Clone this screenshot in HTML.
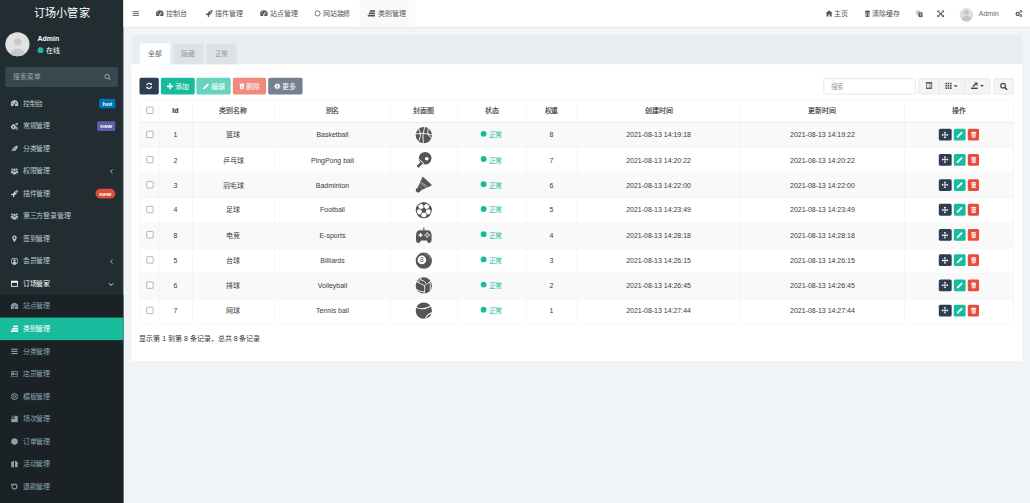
<!DOCTYPE html>
<html lang="zh-CN"><head><meta charset="utf-8">
<style>
html,body{margin:0;padding:0;width:1030px;height:503px;overflow:hidden;background:#f1f4f6}
*{box-sizing:border-box}
#root{position:absolute;left:0;top:0;width:1920px;height:938px;transform:scale(0.536458);transform-origin:0 0;overflow:hidden;font-family:"Liberation Sans",sans-serif;font-size:13px;color:#333;background:#f1f4f6}
.abs{position:absolute}
svg{display:block}
#side{left:0;top:0;width:230px;height:938px;background:#222d32}
#logo{left:0;top:0;width:230px;height:50px;line-height:50px;text-align:center;color:#fff;font-size:20.8px}
.menu{left:0;width:230px;height:42px;color:#b8c7ce;font-size:13px}
.menu .ic{position:absolute;left:20px;top:14px;width:14px;height:14px}
.menu .tx{position:absolute;left:42px;top:0;line-height:42px;white-space:nowrap}
.badge{position:absolute;right:15px;top:12px;height:18px;line-height:18px;padding:0 6px;font-size:11.5px;font-weight:bold;color:#fff;border-radius:3px}
.sub{color:#8aa4af}
#hdr{left:230px;top:0;width:1690px;height:50px;background:#fff}
.nav{top:0;height:50px;line-height:50px;color:#555;font-size:13px;white-space:nowrap}
.tab{height:39px;line-height:39px;text-align:center;color:#999;background:#dce3e8;font-size:13px}
.tab.act{background:#fff;color:#666}
.btn{top:145px;height:31px;line-height:31px;color:#fff;border-radius:3px;font-size:13px;white-space:nowrap}
.btn svg{display:inline-block;vertical-align:middle;position:relative;top:-1px;margin-right:3px}
.btn{text-align:center}
.cell{text-align:center;white-space:nowrap;color:#3a3a3a;font-size:13px}
.cb{display:inline-block;width:13px;height:13px;border:1.2px solid #777;border-radius:2px;background:#fff;vertical-align:middle;position:relative;top:-2px;left:1.5px}
.dot{display:inline-block;width:11px;height:11px;border-radius:50%;background:#18bc9c;margin-right:3px;vertical-align:middle;position:relative;top:-3px;left:-1px}
.sport svg{display:inline-block;vertical-align:middle;position:relative;top:-1px}
.op{display:inline-block;height:22px;border-radius:3px;vertical-align:middle;position:relative;top:-1.5px}
.oi{position:absolute;line-height:0}

</style></head>
<body>
<div id="root">
<div id="side" class="abs">
<div id="logo" class="abs">订场小管家</div>
<div class="abs" style="left:10px;top:60px;width:45px;height:45px;border-radius:50%;background:#e2e2e2;overflow:hidden"><div class="abs" style="left:16px;top:11.5px;width:13.5px;height:13.5px;border-radius:50%;background:#c8c8c8"></div><div class="abs" style="left:8.5px;top:30.5px;width:28px;height:22px;border-radius:50%;background:#c8c8c8"></div></div>
<div class="abs" style="left:70px;top:63.5px;color:#fff;font-weight:bold;font-size:13px;line-height:18px">Admin</div>
<div class="abs" style="left:70px;top:85px;color:#fff;font-size:13px;line-height:18px;white-space:nowrap"><span style="display:inline-block;width:11px;height:11px;border-radius:50%;background:#18bc9c;margin-right:4px;vertical-align:-1px"></span>在线</div>
<div class="abs" style="left:10px;top:125px;width:210px;height:37px;background:#374850;border-radius:3px"></div>
<div class="abs" style="left:24px;top:125px;line-height:37px;color:#9aa8ad;font-size:12.5px">搜索菜单</div>
<svg class="abs" style="left:194px;top:137px" width="13" height="13" viewBox="0 0 13 13"><circle cx="5.5" cy="5.5" r="4" fill="none" stroke="#9aa9ae" stroke-width="1.8"/><path d="M8.5 8.5 12 12" stroke="#9aa9ae" stroke-width="2"/></svg>
<div class="abs menu " style="top:172px;"><div class="ic"><svg width="14" height="14" viewBox="0 0 14 14" fill="currentColor" ><path d="M7 1A7 7 0 0 0 .6 11.8h12.8A7 7 0 0 0 7 1z"/><path d="M6.2 10.5 9.8 4.2" stroke="#222d32" stroke-width="1.5"/><circle cx="6.6" cy="10" r="1.5" fill="#222d32"/><circle cx="3" cy="7.5" r=".9" fill="#222d32"/><circle cx="11" cy="7.5" r=".9" fill="#222d32"/><circle cx="4.6" cy="4.3" r=".8" fill="#222d32"/></svg></div><div class="tx">控制台</div><div class="badge" style="background:#0073b7;border-radius:3px;">hot</div></div>
<div class="abs menu " style="top:214px;"><div class="ic"><svg width="14" height="14" viewBox="0 0 14 14" fill="currentColor" ><circle cx="5" cy="8.5" r="4.3"/><path d="M4 3h2v11H4zM-.5 7.5h11v2h-11z"/><circle cx="5" cy="8.5" r="1.5" fill="#222d32"/><circle cx="11.2" cy="3.3" r="2.4"/><circle cx="11.2" cy="3.3" r="1" fill="#222d32"/><circle cx="11.2" cy="11.5" r="2.4"/><circle cx="11.2" cy="11.5" r="1" fill="#222d32"/></svg></div><div class="tx">常规管理</div><div class="badge" style="background:#605ca8;border-radius:3px;">new</div></div>
<div class="abs menu " style="top:256px;"><div class="ic"><svg width="14" height="14" viewBox="0 0 14 14" fill="currentColor" ><path d="M1 13C3 6 7 2 13 1c0 6-4 11-10 10.5z"/><path d="M2 12.5 9 5" stroke="#222d32" stroke-width="1"/></svg></div><div class="tx">分类管理</div></div>
<div class="abs menu " style="top:298px;"><div class="ic"><svg width="14" height="14" viewBox="0 0 14 14" fill="currentColor" ><circle cx="2.8" cy="4" r="2.1"/><circle cx="11.2" cy="4" r="2.1"/><path d="M0 11V8.8C0 7.3 1.2 6.6 2.8 6.6S5.6 7.3 5.6 8.8V11zM8.4 11V8.8c0-1.5 1.2-2.2 2.8-2.2s2.8.7 2.8 2.2V11z"/><circle cx="7" cy="4.6" r="2.8" stroke="#222d32" stroke-width=".8"/><path d="M3 13.5v-2.8C3 8.8 4.8 7.8 7 7.8s4 1 4 2.9v2.8z" stroke="#222d32" stroke-width=".8"/></svg></div><div class="tx">权限管理</div><svg class="abs" style="left:204px;top:17px" width="8" height="9" viewBox="0 0 8 9"><path d="M6 1 2 4.5 6 8" fill="none" stroke="currentColor" stroke-width="1.6"/></svg></div>
<div class="abs menu " style="top:340px;"><div class="ic"><svg width="14" height="14" viewBox="0 0 14 14" fill="currentColor" ><path d="M13.5.5C9 .8 6 3.5 4 7L1 7.5 0 9.5 3.5 9.8 4.2 10.5 4.5 14 6.5 13 7 10C10.5 8 13.2 5 13.5.5z"/><circle cx="9.8" cy="4.2" r="1.2" fill="#222d32"/></svg></div><div class="tx">插件管理</div><div class="badge" style="background:#dd4b39;border-radius:9px;padding:0 7.5px">new</div></div>
<div class="abs menu " style="top:382px;"><div class="ic"><svg width="14" height="14" viewBox="0 0 14 14" fill="currentColor" ><circle cx="2.8" cy="4" r="2.1"/><circle cx="11.2" cy="4" r="2.1"/><path d="M0 11V8.8C0 7.3 1.2 6.6 2.8 6.6S5.6 7.3 5.6 8.8V11zM8.4 11V8.8c0-1.5 1.2-2.2 2.8-2.2s2.8.7 2.8 2.2V11z"/><circle cx="7" cy="4.6" r="2.8" stroke="#222d32" stroke-width=".8"/><path d="M3 13.5v-2.8C3 8.8 4.8 7.8 7 7.8s4 1 4 2.9v2.8z" stroke="#222d32" stroke-width=".8"/></svg></div><div class="tx">第三方登录管理</div></div>
<div class="abs menu " style="top:424px;"><div class="ic"><svg width="14" height="14" viewBox="0 0 14 14" fill="currentColor" ><path d="M7 1a4.2 4.2 0 0 0-4.2 4.2C2.8 8 7 13.5 7 13.5s4.2-5.5 4.2-8.3A4.2 4.2 0 0 0 7 1z"/><circle cx="7" cy="5.2" r="1.8" fill="#222d32"/></svg></div><div class="tx">签到管理</div></div>
<div class="abs menu " style="top:466px;"><div class="ic"><svg width="14" height="14" viewBox="0 0 14 14" fill="currentColor" ><circle cx="7" cy="7" r="6.5"/><circle cx="7" cy="7" r="5.2" fill="#222d32"/><circle cx="7" cy="5.5" r="2.2"/><path d="M3 11a4 3.2 0 0 1 8 0 5 5 0 0 1-8 0z"/></svg></div><div class="tx">会员管理</div><svg class="abs" style="left:204px;top:17px" width="8" height="9" viewBox="0 0 8 9"><path d="M6 1 2 4.5 6 8" fill="none" stroke="currentColor" stroke-width="1.6"/></svg></div>
<div class="abs menu " style="top:508px;color:#fff;"><div class="ic"><svg width="14" height="14" viewBox="0 0 14 14" fill="currentColor" ><rect x="0.5" y="1.5" width="13" height="11" rx="1"/><rect x="2" y="5" width="10" height="6" fill="#222d32"/></svg></div><div class="tx">订场管家</div><svg class="abs" style="left:202px;top:18px" width="10" height="8" viewBox="0 0 10 8"><path d="M1 2 5 6 9 2" fill="none" stroke="currentColor" stroke-width="1.6"/></svg></div>
<div class="abs" style="left:0;top:550px;width:230px;height:388px;background:#1a2226"></div>
<div class="abs menu sub" style="top:550px;"><div class="ic"><svg width="14" height="14" viewBox="0 0 14 14" fill="currentColor" ><path d="M7 1A7 7 0 0 0 .6 11.8h12.8A7 7 0 0 0 7 1z"/><path d="M6.2 10.5 9.8 4.2" stroke="#1a2226" stroke-width="1.5"/><circle cx="6.6" cy="10" r="1.5" fill="#1a2226"/><circle cx="3" cy="7.5" r=".9" fill="#1a2226"/><circle cx="11" cy="7.5" r=".9" fill="#1a2226"/><circle cx="4.6" cy="4.3" r=".8" fill="#1a2226"/></svg></div><div class="tx">站点管理</div></div>
<div class="abs menu sub" style="top:592px;background:#18bc9c;color:#fff;"><div class="ic"><svg width="14" height="14" viewBox="0 0 14 14" fill="currentColor" ><rect x="4.5" y="1" width="9.5" height="3"/><rect x="2.5" y="5.3" width="11.5" height="3.1"/><rect x="0" y="9.6" width="14" height="3.2"/></svg></div><div class="tx">类别管理</div></div>
<div class="abs menu sub" style="top:634px;"><div class="ic"><svg width="14" height="14" viewBox="0 0 14 14" fill="currentColor" ><rect x="1" y="2" width="12" height="2"/><rect x="1" y="6" width="12" height="2"/><rect x="1" y="10" width="12" height="2"/></svg></div><div class="tx">分类管理</div></div>
<div class="abs menu sub" style="top:676px;"><div class="ic"><svg width="14" height="14" viewBox="0 0 14 14" fill="currentColor" ><rect x="0.5" y="2" width="13" height="10" rx="1"/><rect x="1.7" y="3.2" width="10.6" height="7.6" fill="#1a2226"/><rect x="2.6" y="4.5" width="3.6" height="4.5"/><rect x="7.2" y="5" width="4.2" height="1.1"/><rect x="7.2" y="7.2" width="4.2" height="1.1"/></svg></div><div class="tx">店员管理</div></div>
<div class="abs menu sub" style="top:718px;"><div class="ic"><svg width="14" height="14" viewBox="0 0 14 14" fill="currentColor" ><circle cx="7" cy="7" r="6"/><circle cx="7" cy="7" r="4.6" fill="#1a2226"/><circle cx="7" cy="7" r="2.6"/><circle cx="7" cy="7" r="1.5" fill="#1a2226"/></svg></div><div class="tx">模板管理</div></div>
<div class="abs menu sub" style="top:760px;"><div class="ic"><svg width="14" height="14" viewBox="0 0 14 14" fill="currentColor" ><rect x="1" y="1" width="12" height="12"/><rect x="1" y="1" width="6" height="6" fill="#1a2226"/><rect x="2.5" y="2.5" width="3" height="3"/></svg></div><div class="tx">场次管理</div></div>
<div class="abs menu sub" style="top:802px;"><div class="ic"><svg width="14" height="14" viewBox="0 0 14 14" fill="currentColor" ><path d="M7 .5 13 3.8v6.4L7 13.5 1 10.2V3.8z"/></svg></div><div class="tx">订单管理</div></div>
<div class="abs menu sub" style="top:844px;"><div class="ic"><svg width="14" height="14" viewBox="0 0 14 14" fill="currentColor" ><rect x="1" y="5" width="12" height="8"/><rect x="0.5" y="3.5" width="13" height="3"/><rect x="6" y="3.5" width="2" height="9.5" fill="#1a2226"/><circle cx="4.5" cy="2.5" r="1.8"/><circle cx="9.5" cy="2.5" r="1.8"/></svg></div><div class="tx">活动管理</div></div>
<div class="abs menu sub" style="top:886px;"><div class="ic"><svg width="14" height="14" viewBox="0 0 14 14" fill="currentColor" ><path d="M2.5 7A4.5 4.5 0 1 0 7 2.5 4.6 4.6 0 0 0 3.8 3.8" fill="none" stroke="currentColor" stroke-width="2"/><path d="M1 1v5h5z"/></svg></div><div class="tx">退款管理</div></div>
</div>
<div id="hdr" class="abs"></div>
<div class="abs" style="left:230px;top:49.5px;width:1690px;height:1.5px;background:#dfe4e8"></div>
<svg class="abs" style="left:247px;top:20px" width="12" height="10" viewBox="0 0 12 10" fill="#666"><rect y="0" width="12" height="2"/><rect y="4" width="12" height="2"/><rect y="8" width="12" height="2"/></svg>
<div class="abs" style="left:669.6px;top:0;width:104px;height:50px;background:#fafafa"></div>
<svg class="abs" style="left:291px;top:18px;color:#555" width="14" height="14" viewBox="0 0 14 14" fill="currentColor"><path d="M7 1A7 7 0 0 0 .6 11.8h12.8A7 7 0 0 0 7 1z"/><path d="M6.2 10.5 9.8 4.2" stroke="#fff" stroke-width="1.5"/><circle cx="6.6" cy="10" r="1.5" fill="#fff"/><circle cx="3" cy="7.5" r=".9" fill="#fff"/><circle cx="11" cy="7.5" r=".9" fill="#fff"/><circle cx="4.6" cy="4.3" r=".8" fill="#fff"/></svg><div class="abs nav" style="left:309.8px">控制台</div>
<svg class="abs" style="left:383px;top:18px;color:#555" width="14" height="14" viewBox="0 0 14 14" fill="currentColor"><path d="M13.5.5C9 .8 6 3.5 4 7L1 7.5 0 9.5 3.5 9.8 4.2 10.5 4.5 14 6.5 13 7 10C10.5 8 13.2 5 13.5.5z"/><circle cx="9.8" cy="4.2" r="1.2" fill="#fff"/></svg><div class="abs nav" style="left:400px">插件管理</div>
<svg class="abs" style="left:485px;top:18px;color:#555" width="14" height="14" viewBox="0 0 14 14" fill="currentColor"><path d="M7 1A7 7 0 0 0 .6 11.8h12.8A7 7 0 0 0 7 1z"/><path d="M6.2 10.5 9.8 4.2" stroke="#fff" stroke-width="1.5"/><circle cx="6.6" cy="10" r="1.5" fill="#fff"/><circle cx="3" cy="7.5" r=".9" fill="#fff"/><circle cx="11" cy="7.5" r=".9" fill="#fff"/><circle cx="4.6" cy="4.3" r=".8" fill="#fff"/></svg><div class="abs nav" style="left:503.5px">站点管理</div>
<svg class="abs" style="left:586px;top:18px;color:#555" width="14" height="14" viewBox="0 0 14 14" fill="currentColor"><circle cx="6" cy="7" r="4.8" fill="none" stroke="currentColor" stroke-width="1.5"/></svg><div class="abs nav" style="left:601.3px">网站装修</div>
<svg class="abs" style="left:685px;top:18px;color:#555" width="14" height="14" viewBox="0 0 14 14" fill="currentColor"><rect x="4.5" y="1" width="9.5" height="3"/><rect x="2.5" y="5.3" width="11.5" height="3.1"/><rect x="0" y="9.6" width="14" height="3.2"/></svg><div class="abs nav" style="left:704.4px">类别管理</div>
<svg class="abs" style="left:1539px;top:19px" width="13" height="12" viewBox="0 0 13 12" fill="#555"><path d="M6.5 0 0 5.6h1.8V12h3.4V8h2.6v4h3.4V5.6H13z"/></svg>
<div class="abs nav" style="left:1555px">主页</div>
<svg class="abs" style="left:1611.5px;top:19px" width="10" height="13" viewBox="0 0 10 13" fill="#555"><rect x="0" y="1.5" width="10" height="1.8"/><rect x="3" y="0" width="4" height="2"/><path d="M1 4h8l-.6 9H1.6z"/><rect x="3" y="5.5" width="1" height="6" fill="#fff"/><rect x="6" y="5.5" width="1" height="6" fill="#fff"/></svg>
<div class="abs nav" style="left:1625.3px">清除缓存</div>
<svg class="abs" style="left:1707px;top:19px" width="13" height="13" viewBox="0 0 13 13"><path d="M0 0h7l1 3v6H0z" fill="#ccc"/><path d="M5 4h8v9H6L5 10z" fill="#555"/><path d="M2 6h3M7 7h4M9 6v5" stroke="#fff" stroke-width="1"/></svg>
<svg class="abs" style="left:1747px;top:19px" width="13" height="13" viewBox="0 0 13 13"><g stroke="#555" stroke-width="2"><path d="M2.5 2.5 10.5 10.5M10.5 2.5 2.5 10.5"/></g><g fill="#555"><path d="M0 0h5L0 5z"/><path d="M13 0v5L8 0z"/><path d="M0 13V8l5 5z"/><path d="M13 13H8l5-5z"/></g></svg>
<div class="abs" style="left:1789px;top:14.5px;width:25px;height:25px;border-radius:50%;background:#dedede;overflow:hidden"><div class="abs" style="left:8px;top:4.5px;width:9px;height:9px;border-radius:50%;background:#c4c4c4"></div><div class="abs" style="left:3px;top:15px;width:19px;height:16px;border-radius:50%;background:#c4c4c4"></div></div>
<div class="abs nav" style="left:1824.6px;color:#666">Admin</div>
<svg class="abs" style="left:1891.5px;top:18px" width="14" height="14" viewBox="0 0 14 14" fill="#555"><circle cx="5" cy="8" r="4"/><circle cx="5" cy="8" r="1.6" fill="#fff"/><circle cx="11" cy="3.5" r="2.5"/><circle cx="11" cy="3.5" r="1" fill="#fff"/><circle cx="11" cy="11" r="2.5"/><circle cx="11" cy="11" r="1" fill="#fff"/></svg>
<div class="abs" style="left:245px;top:65px;width:1660px;height:608px;background:#fff;border-radius:2px"></div>
<div class="abs" style="left:245px;top:65px;width:1660px;height:55px;background:#e8edf0;border-radius:2px 2px 0 0"></div>
<div class="abs tab act" style="left:260.6px;width:56px;top:81px">全部</div>
<div class="abs tab" style="left:322.9px;width:56px;top:81px">隐藏</div>
<div class="abs tab" style="left:384.9px;width:56px;top:81px">正常</div>
<div class="abs btn" style="left:260px;width:36.3px;background:#2c3e50"><span style="position:absolute;left:11px;top:8.5px;line-height:0"><svg width="14" height="14" viewBox="0 0 14 14" fill="none" stroke="#fff" stroke-width="2"><path d="M2.5 6A4.6 4.6 0 0 1 11 4.5"/><path d="M11.5 8A4.6 4.6 0 0 1 3 9.5"/><path d="M12.2 1.5v4h-4z" fill="#fff" stroke="none"/><path d="M1.8 12.5v-4h4z" fill="#fff" stroke="none"/></svg></span></div>
<div class="abs btn" style="left:300px;width:63.3px;background:#18bc9c;opacity:1"><svg width="12" height="12" viewBox="0 0 12 12" fill="#fff"><rect x="4.5" y="0" width="3" height="12"/><rect x="0" y="4.5" width="12" height="3"/></svg>添加</div>
<div class="abs btn" style="left:366.3px;width:63.8px;background:#18bc9c;opacity:0.65"><svg width="12" height="12" viewBox="0 0 12 12" fill="#fff"><path d="M0 12l.8-3.2L8.6 1 11 3.4 3.2 11.2z"/><path d="M9.4.2 11.8 2.6 11 3.4 8.6 1z"/></svg>编辑</div>
<div class="abs btn" style="left:434.2px;width:62px;background:#e74c3c;opacity:0.65"><svg width="10" height="12" viewBox="0 0 10 12" fill="#fff"><rect x="0" y="1.2" width="10" height="1.8"/><rect x="3" y="0" width="4" height="2"/><path d="M1 3.6h8l-.6 8.4H1.6z"/><rect x="3" y="5" width="1" height="5.5" fill="#e74c3c"/><rect x="6" y="5" width="1" height="5.5" fill="#e74c3c"/></svg>删除</div>
<div class="abs btn" style="left:500px;width:63.7px;background:#748290;opacity:1"><svg width="12" height="12" viewBox="0 0 12 12" fill="#fff"><circle cx="6" cy="6" r="4.4"/><circle cx="6" cy="6" r="1.7" fill="#748290"/><path d="M5 0h2v2H5zM5 10h2v2H5zM0 5h2v2H0zM10 5h2v2h-2zM1.4 2.8l1.4-1.4 1.4 1.4-1.4 1.4zM7.8 9.2l1.4-1.4 1.4 1.4-1.4 1.4zM1.4 9.2l1.4-1.4 1.4 1.4-1.4 1.4zM7.8 2.8l1.4-1.4 1.4 1.4-1.4 1.4z"/></svg>更多</div>
<div class="abs" style="left:1534.7px;top:146px;width:172.2px;height:30.3px;border:1px solid #d2d6de;border-radius:3px;background:#fff"></div>
<div class="abs" style="left:1548.5px;top:146px;line-height:30px;color:#999;font-size:12px">搜索</div>
<div class="abs" style="left:1711.8px;top:146px;width:134.2px;height:30.3px;border:1px solid #ddd;border-radius:3px;background:#f4f4f4"></div>
<div class="abs" style="left:1749.6px;top:146px;width:1px;height:30.3px;background:#ddd"></div>
<div class="abs" style="left:1797.6px;top:146px;width:1px;height:30.3px;background:#ddd"></div>
<div class="abs" style="left:1852px;top:146px;width:37.6px;height:30.3px;border:1px solid #ddd;border-radius:3px;background:#f4f4f4"></div>
<svg class="abs" style="left:1726px;top:152.5px" width="12" height="13" viewBox="0 0 12 13"><rect x=".8" y=".8" width="10.4" height="11.4" fill="#bbb" stroke="#555" stroke-width="1.6"/><rect x="1.6" y="2" width="4.2" height="9" fill="#e8e8e8"/><rect x="1.6" y="1.2" width="8.8" height="1.6" fill="#555"/><rect x="1.6" y="10.4" width="8.8" height="1.2" fill="#555"/></svg>
<svg class="abs" style="left:1762px;top:153.5px" width="24" height="13" viewBox="0 0 24 13" fill="#444"><rect x="0" y="0" width="3" height="3"/><rect x="4.4" y="0" width="3" height="3"/><rect x="8.8" y="0" width="3" height="3"/><rect x="0" y="4.4" width="3" height="3"/><rect x="4.4" y="4.4" width="3" height="3"/><rect x="8.8" y="4.4" width="3" height="3"/><rect x="0" y="8.8" width="3" height="3"/><rect x="4.4" y="8.8" width="3" height="3"/><rect x="8.8" y="8.8" width="3" height="3"/><path d="M16 5h7l-3.5 3.5z"/></svg>
<svg class="abs" style="left:1810px;top:152.5px" width="26" height="13" viewBox="0 0 26 13" fill="#444"><rect x="0" y="10.3" width="12.5" height="2.7"/><path d="M3.5 8.8 9 3.3" stroke="#444" stroke-width="2.6"/><path d="M6 .8h6.3v6.3z"/><path d="M17 5.5h7l-3.5 3.5z"/></svg>
<svg class="abs" style="left:1864px;top:154px" width="14" height="14" viewBox="0 0 14 14"><circle cx="5.8" cy="5.8" r="4.3" fill="none" stroke="#444" stroke-width="2.2"/><path d="M9 9 13 13" stroke="#444" stroke-width="2.8" stroke-linecap="round"/></svg>
<div class="abs" style="left:259.7px;top:229.0px;width:1629.5px;height:46.8px;background:#f9f9f9"></div>
<div class="abs" style="left:259.7px;top:274.8px;width:1629.5px;height:1px;background:#f0f0f0"></div>
<div class="abs" style="left:259.7px;top:321.6px;width:1629.5px;height:1px;background:#f0f0f0"></div>
<div class="abs" style="left:259.7px;top:322.6px;width:1629.5px;height:46.8px;background:#f9f9f9"></div>
<div class="abs" style="left:259.7px;top:368.40000000000003px;width:1629.5px;height:1px;background:#f0f0f0"></div>
<div class="abs" style="left:259.7px;top:415.2px;width:1629.5px;height:1px;background:#f0f0f0"></div>
<div class="abs" style="left:259.7px;top:416.2px;width:1629.5px;height:46.8px;background:#f9f9f9"></div>
<div class="abs" style="left:259.7px;top:462.0px;width:1629.5px;height:1px;background:#f0f0f0"></div>
<div class="abs" style="left:259.7px;top:508.8px;width:1629.5px;height:1px;background:#f0f0f0"></div>
<div class="abs" style="left:259.7px;top:509.79999999999995px;width:1629.5px;height:46.8px;background:#f9f9f9"></div>
<div class="abs" style="left:259.7px;top:555.5999999999999px;width:1629.5px;height:1px;background:#f0f0f0"></div>
<div class="abs" style="left:259.7px;top:602.3999999999999px;width:1629.5px;height:1px;background:#f0f0f0"></div>
<div class="abs" style="left:259.7px;top:187.2px;width:1629.5px;height:1px;background:#f0f0f0"></div>
<div class="abs" style="left:259.7px;top:227px;width:1629.5px;height:2px;background:#ebebeb"></div>
<div class="abs" style="left:259.2px;top:187.2px;width:1px;height:416.2px;background:#f0f0f0"></div>
<div class="abs" style="left:295.5px;top:187.2px;width:1px;height:416.2px;background:#f0f0f0"></div>
<div class="abs" style="left:357.7px;top:187.2px;width:1px;height:416.2px;background:#f0f0f0"></div>
<div class="abs" style="left:511.4px;top:187.2px;width:1px;height:416.2px;background:#f0f0f0"></div>
<div class="abs" style="left:727.2px;top:187.2px;width:1px;height:416.2px;background:#f0f0f0"></div>
<div class="abs" style="left:851.9px;top:187.2px;width:1px;height:416.2px;background:#f0f0f0"></div>
<div class="abs" style="left:980.4px;top:187.2px;width:1px;height:416.2px;background:#f0f0f0"></div>
<div class="abs" style="left:1074.7px;top:187.2px;width:1px;height:416.2px;background:#f0f0f0"></div>
<div class="abs" style="left:1379.5px;top:187.2px;width:1px;height:416.2px;background:#f0f0f0"></div>
<div class="abs" style="left:1685.7px;top:187.2px;width:1px;height:416.2px;background:#f0f0f0"></div>
<div class="abs" style="left:1888.7px;top:187.2px;width:1px;height:416.2px;background:#f0f0f0"></div>
<div class="abs cell" style="left:259.7px;width:36.30000000000001px;top:187.2px;height:39.80000000000001px;line-height:39.80000000000001px;font-weight:500;color:#333;-webkit-text-stroke:0.25px #333"><span class="cb"></span></div>
<div class="abs cell" style="left:296px;width:62.19999999999999px;top:187.2px;height:39.80000000000001px;line-height:39.80000000000001px;font-weight:bold;color:#333;-webkit-text-stroke:0.25px #333">Id</div>
<div class="abs cell" style="left:358.2px;width:153.7px;top:187.2px;height:39.80000000000001px;line-height:39.80000000000001px;font-weight:500;color:#333;-webkit-text-stroke:0.25px #333">类别名称</div>
<div class="abs cell" style="left:511.9px;width:215.80000000000007px;top:187.2px;height:39.80000000000001px;line-height:39.80000000000001px;font-weight:500;color:#333;-webkit-text-stroke:0.25px #333">别名</div>
<div class="abs cell" style="left:727.7px;width:124.69999999999993px;top:187.2px;height:39.80000000000001px;line-height:39.80000000000001px;font-weight:500;color:#333;-webkit-text-stroke:0.25px #333">封面图</div>
<div class="abs cell" style="left:852.4px;width:128.5px;top:187.2px;height:39.80000000000001px;line-height:39.80000000000001px;font-weight:500;color:#333;-webkit-text-stroke:0.25px #333">状态</div>
<div class="abs cell" style="left:980.9px;width:94.30000000000007px;top:187.2px;height:39.80000000000001px;line-height:39.80000000000001px;font-weight:500;color:#333;-webkit-text-stroke:0.25px #333">权重</div>
<div class="abs cell" style="left:1075.2px;width:304.79999999999995px;top:187.2px;height:39.80000000000001px;line-height:39.80000000000001px;font-weight:500;color:#333;-webkit-text-stroke:0.25px #333">创建时间</div>
<div class="abs cell" style="left:1380px;width:306.20000000000005px;top:187.2px;height:39.80000000000001px;line-height:39.80000000000001px;font-weight:500;color:#333;-webkit-text-stroke:0.25px #333">更新时间</div>
<div class="abs cell" style="left:1686.2px;width:203.0px;top:187.2px;height:39.80000000000001px;line-height:39.80000000000001px;font-weight:500;color:#333;-webkit-text-stroke:0.25px #333">操作</div>
<div class="abs cell" style="left:259.7px;width:36.30000000000001px;top:229.0px;height:46.8px;line-height:46.8px;"><span class="cb"></span></div>
<div class="abs cell" style="left:296px;width:62.19999999999999px;top:229.0px;height:46.8px;line-height:46.8px;">1</div>
<div class="abs cell" style="left:358.2px;width:153.7px;top:229.0px;height:46.8px;line-height:46.8px;">篮球</div>
<div class="abs cell" style="left:511.9px;width:215.80000000000007px;top:229.0px;height:46.8px;line-height:46.8px;">Basketball</div>
<div class="abs cell" style="left:727.7px;width:124.69999999999993px;top:229.0px;height:46.8px;line-height:46.8px;"><span class="sport"><svg width="32" height="32" viewBox="0 0 32 32"><circle cx="16" cy="16" r="15.2" fill="#555"/><g stroke="#fff" stroke-width="1.7" fill="none"><path d="M17.5 1.2Q12.5 15 15 30.8"/><path d="M1.2 13.5Q15 10.5 30.8 15.5"/><path d="M6.5 4.5Q11 11 9.5 18Q8 24 6.5 27"/><path d="M24.5 3.5Q22 9 25 16Q27.5 20 30.5 21"/></g></svg></span></div>
<div class="abs cell" style="left:852.4px;width:128.5px;top:229.0px;height:46.8px;line-height:46.8px;color:#18bc9c"><span class="dot"></span>正常</div>
<div class="abs cell" style="left:980.9px;width:94.30000000000007px;top:229.0px;height:46.8px;line-height:46.8px;">8</div>
<div class="abs cell" style="left:1075.2px;width:304.79999999999995px;top:229.0px;height:46.8px;line-height:46.8px;">2021-08-13 14:19:18</div>
<div class="abs cell" style="left:1380px;width:306.20000000000005px;top:229.0px;height:46.8px;line-height:46.8px;">2021-08-13 14:19:22</div>
<div class="abs cell" style="left:1686.2px;width:203.0px;top:229.0px;height:46.8px;line-height:46.8px;"><span class="op" style="background:#2c3e50;width:23.4px;margin-right:4.4px"><span class="oi" style="left:5.2px;top:4.5px"><svg width="13" height="13" viewBox="0 0 13 13" fill="#fff"><path d="M6.5 0 9 2.5H7.3v3.2h3.2V4L13 6.5 10.5 9V7.3H7.3v3.2H9L6.5 13 4 10.5h1.7V7.3H2.5V9L0 6.5 2.5 4v1.7h3.2V2.5H4z"/></svg></span></span><span class="op" style="background:#18bc9c;width:22px;margin-right:4.4px"><span class="oi" style="left:5px;top:5px"><svg width="12" height="12" viewBox="0 0 12 12" fill="#fff"><path d="M0 12l.8-3.2L8.6 1 11 3.4 3.2 11.2z"/><path d="M9.4.2 11.8 2.6 11 3.4 8.6 1z"/></svg></span></span><span class="op" style="background:#e74c3c;width:20.7px"><span class="oi" style="left:5.4px;top:5px"><svg width="10" height="12" viewBox="0 0 10 12" fill="#fff"><rect x="0" y="1.2" width="10" height="1.8"/><rect x="3" y="0" width="4" height="2"/><path d="M1 3.6h8l-.6 8.4H1.6z"/><rect x="3" y="5" width="1" height="5.5" fill="#e74c3c"/><rect x="6" y="5" width="1" height="5.5" fill="#e74c3c"/></svg></span></span></div>
<div class="abs cell" style="left:259.7px;width:36.30000000000001px;top:275.8px;height:46.8px;line-height:46.8px;"><span class="cb"></span></div>
<div class="abs cell" style="left:296px;width:62.19999999999999px;top:275.8px;height:46.8px;line-height:46.8px;">2</div>
<div class="abs cell" style="left:358.2px;width:153.7px;top:275.8px;height:46.8px;line-height:46.8px;">乒乓球</div>
<div class="abs cell" style="left:511.9px;width:215.80000000000007px;top:275.8px;height:46.8px;line-height:46.8px;">PingPong ball</div>
<div class="abs cell" style="left:727.7px;width:124.69999999999993px;top:275.8px;height:46.8px;line-height:46.8px;"><span class="sport"><svg width="32" height="32" viewBox="0 0 32 32"><circle cx="18.5" cy="13" r="11.8" fill="#555"/><path d="M12.5 17.5 2.5 27.5l3.5 3.5 10-10z" fill="#555"/><path d="M8 15 17 24.5" stroke="#fff" stroke-width="1.8"/><circle cx="21.5" cy="14" r="3.4" fill="#fff"/></svg></span></div>
<div class="abs cell" style="left:852.4px;width:128.5px;top:275.8px;height:46.8px;line-height:46.8px;color:#18bc9c"><span class="dot"></span>正常</div>
<div class="abs cell" style="left:980.9px;width:94.30000000000007px;top:275.8px;height:46.8px;line-height:46.8px;">7</div>
<div class="abs cell" style="left:1075.2px;width:304.79999999999995px;top:275.8px;height:46.8px;line-height:46.8px;">2021-08-13 14:20:22</div>
<div class="abs cell" style="left:1380px;width:306.20000000000005px;top:275.8px;height:46.8px;line-height:46.8px;">2021-08-13 14:20:22</div>
<div class="abs cell" style="left:1686.2px;width:203.0px;top:275.8px;height:46.8px;line-height:46.8px;"><span class="op" style="background:#2c3e50;width:23.4px;margin-right:4.4px"><span class="oi" style="left:5.2px;top:4.5px"><svg width="13" height="13" viewBox="0 0 13 13" fill="#fff"><path d="M6.5 0 9 2.5H7.3v3.2h3.2V4L13 6.5 10.5 9V7.3H7.3v3.2H9L6.5 13 4 10.5h1.7V7.3H2.5V9L0 6.5 2.5 4v1.7h3.2V2.5H4z"/></svg></span></span><span class="op" style="background:#18bc9c;width:22px;margin-right:4.4px"><span class="oi" style="left:5px;top:5px"><svg width="12" height="12" viewBox="0 0 12 12" fill="#fff"><path d="M0 12l.8-3.2L8.6 1 11 3.4 3.2 11.2z"/><path d="M9.4.2 11.8 2.6 11 3.4 8.6 1z"/></svg></span></span><span class="op" style="background:#e74c3c;width:20.7px"><span class="oi" style="left:5.4px;top:5px"><svg width="10" height="12" viewBox="0 0 10 12" fill="#fff"><rect x="0" y="1.2" width="10" height="1.8"/><rect x="3" y="0" width="4" height="2"/><path d="M1 3.6h8l-.6 8.4H1.6z"/><rect x="3" y="5" width="1" height="5.5" fill="#e74c3c"/><rect x="6" y="5" width="1" height="5.5" fill="#e74c3c"/></svg></span></span></div>
<div class="abs cell" style="left:259.7px;width:36.30000000000001px;top:322.6px;height:46.8px;line-height:46.8px;"><span class="cb"></span></div>
<div class="abs cell" style="left:296px;width:62.19999999999999px;top:322.6px;height:46.8px;line-height:46.8px;">3</div>
<div class="abs cell" style="left:358.2px;width:153.7px;top:322.6px;height:46.8px;line-height:46.8px;">羽毛球</div>
<div class="abs cell" style="left:511.9px;width:215.80000000000007px;top:322.6px;height:46.8px;line-height:46.8px;">Badminton</div>
<div class="abs cell" style="left:727.7px;width:124.69999999999993px;top:322.6px;height:46.8px;line-height:46.8px;"><span class="sport"><svg width="32" height="32" viewBox="0 0 32 32"><path d="M14 0 31.5 16.5 13 24.5 7 15.5z" fill="#555"/><path d="M7 15.5 13 24.5 9.5 27 4.5 19z" fill="#555"/><circle cx="5.5" cy="25.5" r="4.5" fill="#555"/><g stroke="#fff" stroke-width="1.1" opacity=".8"><path d="M9.5 12.5 21 20.5"/><path d="M11 10.5 22.5 18.5"/></g></svg></span></div>
<div class="abs cell" style="left:852.4px;width:128.5px;top:322.6px;height:46.8px;line-height:46.8px;color:#18bc9c"><span class="dot"></span>正常</div>
<div class="abs cell" style="left:980.9px;width:94.30000000000007px;top:322.6px;height:46.8px;line-height:46.8px;">6</div>
<div class="abs cell" style="left:1075.2px;width:304.79999999999995px;top:322.6px;height:46.8px;line-height:46.8px;">2021-08-13 14:22:00</div>
<div class="abs cell" style="left:1380px;width:306.20000000000005px;top:322.6px;height:46.8px;line-height:46.8px;">2021-08-13 14:22:00</div>
<div class="abs cell" style="left:1686.2px;width:203.0px;top:322.6px;height:46.8px;line-height:46.8px;"><span class="op" style="background:#2c3e50;width:23.4px;margin-right:4.4px"><span class="oi" style="left:5.2px;top:4.5px"><svg width="13" height="13" viewBox="0 0 13 13" fill="#fff"><path d="M6.5 0 9 2.5H7.3v3.2h3.2V4L13 6.5 10.5 9V7.3H7.3v3.2H9L6.5 13 4 10.5h1.7V7.3H2.5V9L0 6.5 2.5 4v1.7h3.2V2.5H4z"/></svg></span></span><span class="op" style="background:#18bc9c;width:22px;margin-right:4.4px"><span class="oi" style="left:5px;top:5px"><svg width="12" height="12" viewBox="0 0 12 12" fill="#fff"><path d="M0 12l.8-3.2L8.6 1 11 3.4 3.2 11.2z"/><path d="M9.4.2 11.8 2.6 11 3.4 8.6 1z"/></svg></span></span><span class="op" style="background:#e74c3c;width:20.7px"><span class="oi" style="left:5.4px;top:5px"><svg width="10" height="12" viewBox="0 0 10 12" fill="#fff"><rect x="0" y="1.2" width="10" height="1.8"/><rect x="3" y="0" width="4" height="2"/><path d="M1 3.6h8l-.6 8.4H1.6z"/><rect x="3" y="5" width="1" height="5.5" fill="#e74c3c"/><rect x="6" y="5" width="1" height="5.5" fill="#e74c3c"/></svg></span></span></div>
<div class="abs cell" style="left:259.7px;width:36.30000000000001px;top:369.4px;height:46.8px;line-height:46.8px;"><span class="cb"></span></div>
<div class="abs cell" style="left:296px;width:62.19999999999999px;top:369.4px;height:46.8px;line-height:46.8px;">4</div>
<div class="abs cell" style="left:358.2px;width:153.7px;top:369.4px;height:46.8px;line-height:46.8px;">足球</div>
<div class="abs cell" style="left:511.9px;width:215.80000000000007px;top:369.4px;height:46.8px;line-height:46.8px;">Football</div>
<div class="abs cell" style="left:727.7px;width:124.69999999999993px;top:369.4px;height:46.8px;line-height:46.8px;"><span class="sport"><svg width="32" height="32" viewBox="0 0 32 32"><defs><clipPath id="fbc"><circle cx="16" cy="16" r="15.2"/></clipPath></defs><g clip-path="url(#fbc)"><circle cx="16" cy="16" r="15.2" fill="#555"/><circle cx="16" cy="16" r="13" fill="#fff"/><path d="M16 10.5 21.2 14.3 19.2 20.4H12.8L10.8 14.3z" fill="#555"/><circle cx="16" cy="1" r="5" fill="#555"/><circle cx="30.3" cy="11.4" r="5" fill="#555"/><circle cx="24.8" cy="28.2" r="5" fill="#555"/><circle cx="7.2" cy="28.2" r="5" fill="#555"/><circle cx="1.7" cy="11.4" r="5" fill="#555"/><g stroke="#555" stroke-width="1.8"><path d="M16 10.5V5M21.2 14.3l4.8-1.5M19.2 20.4l3 4M12.8 20.4l-3 4M10.8 14.3 6 12.8"/></g></g></svg></span></div>
<div class="abs cell" style="left:852.4px;width:128.5px;top:369.4px;height:46.8px;line-height:46.8px;color:#18bc9c"><span class="dot"></span>正常</div>
<div class="abs cell" style="left:980.9px;width:94.30000000000007px;top:369.4px;height:46.8px;line-height:46.8px;">5</div>
<div class="abs cell" style="left:1075.2px;width:304.79999999999995px;top:369.4px;height:46.8px;line-height:46.8px;">2021-08-13 14:23:49</div>
<div class="abs cell" style="left:1380px;width:306.20000000000005px;top:369.4px;height:46.8px;line-height:46.8px;">2021-08-13 14:23:49</div>
<div class="abs cell" style="left:1686.2px;width:203.0px;top:369.4px;height:46.8px;line-height:46.8px;"><span class="op" style="background:#2c3e50;width:23.4px;margin-right:4.4px"><span class="oi" style="left:5.2px;top:4.5px"><svg width="13" height="13" viewBox="0 0 13 13" fill="#fff"><path d="M6.5 0 9 2.5H7.3v3.2h3.2V4L13 6.5 10.5 9V7.3H7.3v3.2H9L6.5 13 4 10.5h1.7V7.3H2.5V9L0 6.5 2.5 4v1.7h3.2V2.5H4z"/></svg></span></span><span class="op" style="background:#18bc9c;width:22px;margin-right:4.4px"><span class="oi" style="left:5px;top:5px"><svg width="12" height="12" viewBox="0 0 12 12" fill="#fff"><path d="M0 12l.8-3.2L8.6 1 11 3.4 3.2 11.2z"/><path d="M9.4.2 11.8 2.6 11 3.4 8.6 1z"/></svg></span></span><span class="op" style="background:#e74c3c;width:20.7px"><span class="oi" style="left:5.4px;top:5px"><svg width="10" height="12" viewBox="0 0 10 12" fill="#fff"><rect x="0" y="1.2" width="10" height="1.8"/><rect x="3" y="0" width="4" height="2"/><path d="M1 3.6h8l-.6 8.4H1.6z"/><rect x="3" y="5" width="1" height="5.5" fill="#e74c3c"/><rect x="6" y="5" width="1" height="5.5" fill="#e74c3c"/></svg></span></span></div>
<div class="abs cell" style="left:259.7px;width:36.30000000000001px;top:416.2px;height:46.8px;line-height:46.8px;"><span class="cb"></span></div>
<div class="abs cell" style="left:296px;width:62.19999999999999px;top:416.2px;height:46.8px;line-height:46.8px;">8</div>
<div class="abs cell" style="left:358.2px;width:153.7px;top:416.2px;height:46.8px;line-height:46.8px;">电竞</div>
<div class="abs cell" style="left:511.9px;width:215.80000000000007px;top:416.2px;height:46.8px;line-height:46.8px;">E-sports</div>
<div class="abs cell" style="left:727.7px;width:124.69999999999993px;top:416.2px;height:46.8px;line-height:46.8px;"><span class="sport"><svg width="32" height="32" viewBox="0 0 32 32"><path d="M9 6h14c4.5 0 7.5 3.5 7.5 9.5v9c0 3.5-2 5.5-4.5 5.5-2.5 0-3.5-2-4.5-4.5h-11C9.5 28 8.5 30 6 30c-2.5 0-4.5-2-4.5-5.5v-9C1.5 9.5 4.5 6 9 6z" fill="#555"/><rect x="15" y="1.5" width="2.2" height="5" fill="#555"/><path d="M10 11.5v7.5M6.2 15.2h7.6" stroke="#fff" stroke-width="2.6"/><g fill="none" stroke="#fff" stroke-width="1.2"><circle cx="22.5" cy="12" r="1.5"/><circle cx="22.5" cy="18.5" r="1.5"/><circle cx="19.2" cy="15.2" r="1.5"/><circle cx="25.8" cy="15.2" r="1.5"/></g></svg></span></div>
<div class="abs cell" style="left:852.4px;width:128.5px;top:416.2px;height:46.8px;line-height:46.8px;color:#18bc9c"><span class="dot"></span>正常</div>
<div class="abs cell" style="left:980.9px;width:94.30000000000007px;top:416.2px;height:46.8px;line-height:46.8px;">4</div>
<div class="abs cell" style="left:1075.2px;width:304.79999999999995px;top:416.2px;height:46.8px;line-height:46.8px;">2021-08-13 14:28:18</div>
<div class="abs cell" style="left:1380px;width:306.20000000000005px;top:416.2px;height:46.8px;line-height:46.8px;">2021-08-13 14:28:18</div>
<div class="abs cell" style="left:1686.2px;width:203.0px;top:416.2px;height:46.8px;line-height:46.8px;"><span class="op" style="background:#2c3e50;width:23.4px;margin-right:4.4px"><span class="oi" style="left:5.2px;top:4.5px"><svg width="13" height="13" viewBox="0 0 13 13" fill="#fff"><path d="M6.5 0 9 2.5H7.3v3.2h3.2V4L13 6.5 10.5 9V7.3H7.3v3.2H9L6.5 13 4 10.5h1.7V7.3H2.5V9L0 6.5 2.5 4v1.7h3.2V2.5H4z"/></svg></span></span><span class="op" style="background:#18bc9c;width:22px;margin-right:4.4px"><span class="oi" style="left:5px;top:5px"><svg width="12" height="12" viewBox="0 0 12 12" fill="#fff"><path d="M0 12l.8-3.2L8.6 1 11 3.4 3.2 11.2z"/><path d="M9.4.2 11.8 2.6 11 3.4 8.6 1z"/></svg></span></span><span class="op" style="background:#e74c3c;width:20.7px"><span class="oi" style="left:5.4px;top:5px"><svg width="10" height="12" viewBox="0 0 10 12" fill="#fff"><rect x="0" y="1.2" width="10" height="1.8"/><rect x="3" y="0" width="4" height="2"/><path d="M1 3.6h8l-.6 8.4H1.6z"/><rect x="3" y="5" width="1" height="5.5" fill="#e74c3c"/><rect x="6" y="5" width="1" height="5.5" fill="#e74c3c"/></svg></span></span></div>
<div class="abs cell" style="left:259.7px;width:36.30000000000001px;top:463.0px;height:46.8px;line-height:46.8px;"><span class="cb"></span></div>
<div class="abs cell" style="left:296px;width:62.19999999999999px;top:463.0px;height:46.8px;line-height:46.8px;">5</div>
<div class="abs cell" style="left:358.2px;width:153.7px;top:463.0px;height:46.8px;line-height:46.8px;">台球</div>
<div class="abs cell" style="left:511.9px;width:215.80000000000007px;top:463.0px;height:46.8px;line-height:46.8px;">Billiards</div>
<div class="abs cell" style="left:727.7px;width:124.69999999999993px;top:463.0px;height:46.8px;line-height:46.8px;"><span class="sport"><svg width="32" height="32" viewBox="0 0 32 32"><circle cx="16" cy="16" r="15.2" fill="#555"/><circle cx="12.5" cy="14.5" r="8" fill="#fff"/><text x="12.5" y="19" font-size="12.5" font-family="Liberation Sans" text-anchor="middle" fill="#555">8</text><path d="M19 3.5A13 13 0 0 1 28.5 13" stroke="#ccc" stroke-width="1.6" fill="none" stroke-dasharray="2 1"/></svg></span></div>
<div class="abs cell" style="left:852.4px;width:128.5px;top:463.0px;height:46.8px;line-height:46.8px;color:#18bc9c"><span class="dot"></span>正常</div>
<div class="abs cell" style="left:980.9px;width:94.30000000000007px;top:463.0px;height:46.8px;line-height:46.8px;">3</div>
<div class="abs cell" style="left:1075.2px;width:304.79999999999995px;top:463.0px;height:46.8px;line-height:46.8px;">2021-08-13 14:26:15</div>
<div class="abs cell" style="left:1380px;width:306.20000000000005px;top:463.0px;height:46.8px;line-height:46.8px;">2021-08-13 14:26:15</div>
<div class="abs cell" style="left:1686.2px;width:203.0px;top:463.0px;height:46.8px;line-height:46.8px;"><span class="op" style="background:#2c3e50;width:23.4px;margin-right:4.4px"><span class="oi" style="left:5.2px;top:4.5px"><svg width="13" height="13" viewBox="0 0 13 13" fill="#fff"><path d="M6.5 0 9 2.5H7.3v3.2h3.2V4L13 6.5 10.5 9V7.3H7.3v3.2H9L6.5 13 4 10.5h1.7V7.3H2.5V9L0 6.5 2.5 4v1.7h3.2V2.5H4z"/></svg></span></span><span class="op" style="background:#18bc9c;width:22px;margin-right:4.4px"><span class="oi" style="left:5px;top:5px"><svg width="12" height="12" viewBox="0 0 12 12" fill="#fff"><path d="M0 12l.8-3.2L8.6 1 11 3.4 3.2 11.2z"/><path d="M9.4.2 11.8 2.6 11 3.4 8.6 1z"/></svg></span></span><span class="op" style="background:#e74c3c;width:20.7px"><span class="oi" style="left:5.4px;top:5px"><svg width="10" height="12" viewBox="0 0 10 12" fill="#fff"><rect x="0" y="1.2" width="10" height="1.8"/><rect x="3" y="0" width="4" height="2"/><path d="M1 3.6h8l-.6 8.4H1.6z"/><rect x="3" y="5" width="1" height="5.5" fill="#e74c3c"/><rect x="6" y="5" width="1" height="5.5" fill="#e74c3c"/></svg></span></span></div>
<div class="abs cell" style="left:259.7px;width:36.30000000000001px;top:509.79999999999995px;height:46.8px;line-height:46.8px;"><span class="cb"></span></div>
<div class="abs cell" style="left:296px;width:62.19999999999999px;top:509.79999999999995px;height:46.8px;line-height:46.8px;">6</div>
<div class="abs cell" style="left:358.2px;width:153.7px;top:509.79999999999995px;height:46.8px;line-height:46.8px;">排球</div>
<div class="abs cell" style="left:511.9px;width:215.80000000000007px;top:509.79999999999995px;height:46.8px;line-height:46.8px;">Volleyball</div>
<div class="abs cell" style="left:727.7px;width:124.69999999999993px;top:509.79999999999995px;height:46.8px;line-height:46.8px;"><span class="sport"><svg width="32" height="32" viewBox="0 0 32 32"><circle cx="16" cy="16" r="15.2" fill="#555"/><g stroke="#fff" stroke-width="1.6" fill="none"><path d="M2.5 9Q10 12.5 17.5 16.5"/><path d="M17.5 16.5Q23 12 29.5 8.5"/><path d="M17.5 16.5Q18.5 24 16.5 31.2"/><path d="M12 2.5Q7 6 5 11"/><path d="M9 5Q16 6.5 20.5 12"/><path d="M2 23.5Q9 28 16.5 28.5"/><path d="M27 8.5Q29.5 16 27.5 25"/></g></svg></span></div>
<div class="abs cell" style="left:852.4px;width:128.5px;top:509.79999999999995px;height:46.8px;line-height:46.8px;color:#18bc9c"><span class="dot"></span>正常</div>
<div class="abs cell" style="left:980.9px;width:94.30000000000007px;top:509.79999999999995px;height:46.8px;line-height:46.8px;">2</div>
<div class="abs cell" style="left:1075.2px;width:304.79999999999995px;top:509.79999999999995px;height:46.8px;line-height:46.8px;">2021-08-13 14:26:45</div>
<div class="abs cell" style="left:1380px;width:306.20000000000005px;top:509.79999999999995px;height:46.8px;line-height:46.8px;">2021-08-13 14:26:45</div>
<div class="abs cell" style="left:1686.2px;width:203.0px;top:509.79999999999995px;height:46.8px;line-height:46.8px;"><span class="op" style="background:#2c3e50;width:23.4px;margin-right:4.4px"><span class="oi" style="left:5.2px;top:4.5px"><svg width="13" height="13" viewBox="0 0 13 13" fill="#fff"><path d="M6.5 0 9 2.5H7.3v3.2h3.2V4L13 6.5 10.5 9V7.3H7.3v3.2H9L6.5 13 4 10.5h1.7V7.3H2.5V9L0 6.5 2.5 4v1.7h3.2V2.5H4z"/></svg></span></span><span class="op" style="background:#18bc9c;width:22px;margin-right:4.4px"><span class="oi" style="left:5px;top:5px"><svg width="12" height="12" viewBox="0 0 12 12" fill="#fff"><path d="M0 12l.8-3.2L8.6 1 11 3.4 3.2 11.2z"/><path d="M9.4.2 11.8 2.6 11 3.4 8.6 1z"/></svg></span></span><span class="op" style="background:#e74c3c;width:20.7px"><span class="oi" style="left:5.4px;top:5px"><svg width="10" height="12" viewBox="0 0 10 12" fill="#fff"><rect x="0" y="1.2" width="10" height="1.8"/><rect x="3" y="0" width="4" height="2"/><path d="M1 3.6h8l-.6 8.4H1.6z"/><rect x="3" y="5" width="1" height="5.5" fill="#e74c3c"/><rect x="6" y="5" width="1" height="5.5" fill="#e74c3c"/></svg></span></span></div>
<div class="abs cell" style="left:259.7px;width:36.30000000000001px;top:556.5999999999999px;height:46.8px;line-height:46.8px;"><span class="cb"></span></div>
<div class="abs cell" style="left:296px;width:62.19999999999999px;top:556.5999999999999px;height:46.8px;line-height:46.8px;">7</div>
<div class="abs cell" style="left:358.2px;width:153.7px;top:556.5999999999999px;height:46.8px;line-height:46.8px;">网球</div>
<div class="abs cell" style="left:511.9px;width:215.80000000000007px;top:556.5999999999999px;height:46.8px;line-height:46.8px;">Tennis ball</div>
<div class="abs cell" style="left:727.7px;width:124.69999999999993px;top:556.5999999999999px;height:46.8px;line-height:46.8px;"><span class="sport"><svg width="32" height="32" viewBox="0 0 32 32"><circle cx="16" cy="16" r="15.2" fill="#555"/><g stroke="#fff" stroke-width="1.9" fill="none"><path d="M1.5 10Q15 16 29.5 7.5"/><path d="M19 31Q21.5 23 31 20"/></g></svg></span></div>
<div class="abs cell" style="left:852.4px;width:128.5px;top:556.5999999999999px;height:46.8px;line-height:46.8px;color:#18bc9c"><span class="dot"></span>正常</div>
<div class="abs cell" style="left:980.9px;width:94.30000000000007px;top:556.5999999999999px;height:46.8px;line-height:46.8px;">1</div>
<div class="abs cell" style="left:1075.2px;width:304.79999999999995px;top:556.5999999999999px;height:46.8px;line-height:46.8px;">2021-08-13 14:27:44</div>
<div class="abs cell" style="left:1380px;width:306.20000000000005px;top:556.5999999999999px;height:46.8px;line-height:46.8px;">2021-08-13 14:27:44</div>
<div class="abs cell" style="left:1686.2px;width:203.0px;top:556.5999999999999px;height:46.8px;line-height:46.8px;"><span class="op" style="background:#2c3e50;width:23.4px;margin-right:4.4px"><span class="oi" style="left:5.2px;top:4.5px"><svg width="13" height="13" viewBox="0 0 13 13" fill="#fff"><path d="M6.5 0 9 2.5H7.3v3.2h3.2V4L13 6.5 10.5 9V7.3H7.3v3.2H9L6.5 13 4 10.5h1.7V7.3H2.5V9L0 6.5 2.5 4v1.7h3.2V2.5H4z"/></svg></span></span><span class="op" style="background:#18bc9c;width:22px;margin-right:4.4px"><span class="oi" style="left:5px;top:5px"><svg width="12" height="12" viewBox="0 0 12 12" fill="#fff"><path d="M0 12l.8-3.2L8.6 1 11 3.4 3.2 11.2z"/><path d="M9.4.2 11.8 2.6 11 3.4 8.6 1z"/></svg></span></span><span class="op" style="background:#e74c3c;width:20.7px"><span class="oi" style="left:5.4px;top:5px"><svg width="10" height="12" viewBox="0 0 10 12" fill="#fff"><rect x="0" y="1.2" width="10" height="1.8"/><rect x="3" y="0" width="4" height="2"/><path d="M1 3.6h8l-.6 8.4H1.6z"/><rect x="3" y="5" width="1" height="5.5" fill="#e74c3c"/><rect x="6" y="5" width="1" height="5.5" fill="#e74c3c"/></svg></span></span></div>
<div class="abs" style="left:260px;top:620px;line-height:22px;font-size:13px;color:#333;white-space:nowrap">显示第 1 到第 8 条记录，总共 8 条记录</div>
</div>
</body></html>
